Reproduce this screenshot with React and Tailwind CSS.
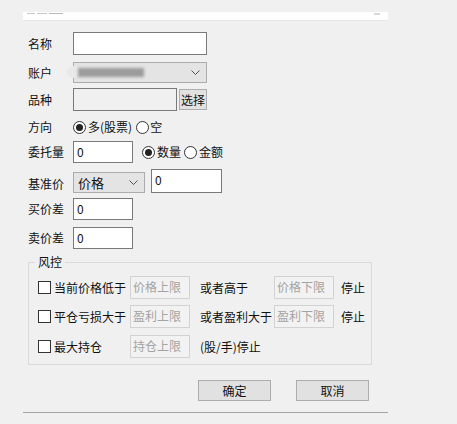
const Radio = ({ checked }) => (
  <span className="w-[13px] h-[13px] rounded-full border border-[#333] bg-white flex items-center justify-center shrink-0">
    {checked && <span className="w-[7px] h-[7px] rounded-full bg-[#222]" />}
  </span>
);

const Check = () => (
  <span className="w-[13px] h-[13px] border border-[#333] bg-white shrink-0" />
);

const Chevron = () => (
  <svg width="9" height="5" viewBox="0 0 9 5" className="shrink-0">
    <polyline points="0.5,0.5 4.5,4.5 8.5,0.5" fill="none" stroke="#555" strokeWidth="1" />
  </svg>
);

const Box = ({ value, className }) => (
  <div className={`h-full border border-[#7a7a7a] bg-white pl-[3px] pt-[2px] leading-[16px] ${className}`}>
    {value}
  </div>
);

const Limit = ({ text, className }) => (
  <div className={`w-[60px] h-[23px] border border-[#d2d2d2] bg-[#f2f2f2] text-[#a3a3a3] pl-[2px] leading-[20px] ${className}`}>
    {text}
  </div>
);

const Btn = ({ text, className }) => (
  <div className={`w-[73px] h-[21px] border border-[#adadad] bg-[#e1e1e1] flex items-center justify-center ${className}`}>
    {text}
  </div>
);

export default function App() {
  return (
    <div
      className="w-[457px] h-[424px] bg-[#f0f0f0] overflow-hidden text-[12px] text-[#111] flex flex-col"
      style={{ fontFamily: '"Microsoft YaHei", "Noto Sans CJK SC", sans-serif' }}
    >
      <div className="ml-[23px] mt-[12px] w-[365px] h-[9px] bg-white border-b border-[#e6e6e6] flex justify-between items-start px-[4px]">
        <div className="flex gap-[2px] mt-[1px]">
          <span className="w-[8px] h-[1px] bg-[#c8c8c8]" />
          <span className="w-[10px] h-[1px] bg-[#c8c8c8]" />
          <span className="w-[14px] h-[1px] bg-[#b8b8b8]" />
        </div>
        <span className="w-[6px] h-[2px] bg-[#d8d8d8] mt-[1px] mr-[4px]" />
      </div>

      <div className="flex items-center h-[23px] mt-[11px] pl-[28px]">
        <span className="w-[45px]">名称</span>
        <Box className="w-[134px]" />
      </div>

      <div className="flex items-center h-[21px] mt-[7px] pl-[28px]">
        <span className="w-[45px]">账户</span>
        <div className="relative w-[134px] h-full border border-[#acacac] bg-[#e4e4e4] flex items-center justify-between pl-[4px] pr-[6px]">
          <span className="absolute left-[-7px] top-[3px] w-[12px] h-[12px] rounded-full bg-[#e9e9e9]" />
          <span className="w-[66px] h-[9px] bg-[#9c9c9c] blur-[1.5px]" />
          <Chevron />
        </div>
      </div>

      <div className="flex items-center h-[23px] mt-[5px] pl-[28px]">
        <span className="w-[45px]">品种</span>
        <div className="w-[104px] h-full border border-[#7a7a7a] bg-[#f0f0f0]" />
        <div className="ml-[2px] w-[28px] h-[21px] border border-[#adadad] bg-[#e1e1e1] flex items-center justify-center">选择</div>
      </div>

      <div className="flex items-center h-[14px] mt-[9px] pl-[28px]">
        <span className="w-[45px]">方向</span>
        <Radio checked />
        <span className="ml-[2px]">多(股票)</span>
        <span className="ml-[4px]"><Radio /></span>
        <span className="ml-[1px]">空</span>
      </div>

      <div className="flex items-center h-[22px] mt-[7px] pl-[28px]">
        <span className="w-[45px]">委托量</span>
        <Box className="w-[60px]" value="0" />
        <span className="ml-[9px]"><Radio checked /></span>
        <span className="ml-[2px]">数量</span>
        <span className="ml-[3px]"><Radio /></span>
        <span className="ml-[2px]">金额</span>
      </div>

      <div className="flex items-start h-[24px] mt-[6px] pl-[28px]">
        <span className="w-[45px] mt-[6px]">基准价</span>
        <div className="mt-[3px] w-[72px] h-[21px] border border-[#acacac] bg-[#e4e4e4] flex items-center justify-between pl-[4px] pr-[6px]">
          <span className="text-[13px]">价格</span>
          <Chevron />
        </div>
        <Box className="ml-[6px] w-[71px] h-[22px]" value="0" />
      </div>

      <div className="flex items-center h-[22px] mt-[5px] pl-[28px]">
        <span className="w-[45px]">买价差</span>
        <Box className="w-[60px]" value="0" />
      </div>

      <div className="flex items-center h-[22px] mt-[7px] pl-[28px]">
        <span className="w-[45px]">卖价差</span>
        <Box className="w-[60px]" value="0" />
      </div>

      <div className="relative ml-[28px] mt-[13px] w-[344px] h-[103px] border border-[#dadada] flex flex-col pl-[9px]">
        <span className="absolute left-[6px] top-[-8px] px-[3px] bg-[#f0f0f0] leading-[14px]">风控</span>
        <div className="flex items-center h-[23px] mt-[13px]">
          <Check />
          <span className="ml-[3px] w-[76px]">当前价格低于</span>
          <Limit text="价格上限" />
          <span className="ml-[10px] w-[74px]">或者高于</span>
          <Limit text="价格下限" />
          <span className="ml-[7px]">停止</span>
        </div>
        <div className="flex items-center h-[23px] mt-[6px]">
          <Check />
          <span className="ml-[3px] w-[76px]">平仓亏损大于</span>
          <Limit text="盈利上限" />
          <span className="ml-[10px] w-[74px]">或者盈利大于</span>
          <Limit text="盈利下限" />
          <span className="ml-[7px]">停止</span>
        </div>
        <div className="flex items-center h-[23px] mt-[7px]">
          <Check />
          <span className="ml-[3px] w-[76px]">最大持仓</span>
          <Limit text="持仓上限" />
          <span className="ml-[10px]">(股/手)停止</span>
        </div>
      </div>

      <div className="flex mt-[15px] ml-[198px] gap-[25px]">
        <Btn text="确定" />
        <Btn text="取消" />
      </div>

      <div className="ml-[23px] mt-[11px] w-[365px] h-[1px] bg-[#a3a3a3]" />
    </div>
  );
}
